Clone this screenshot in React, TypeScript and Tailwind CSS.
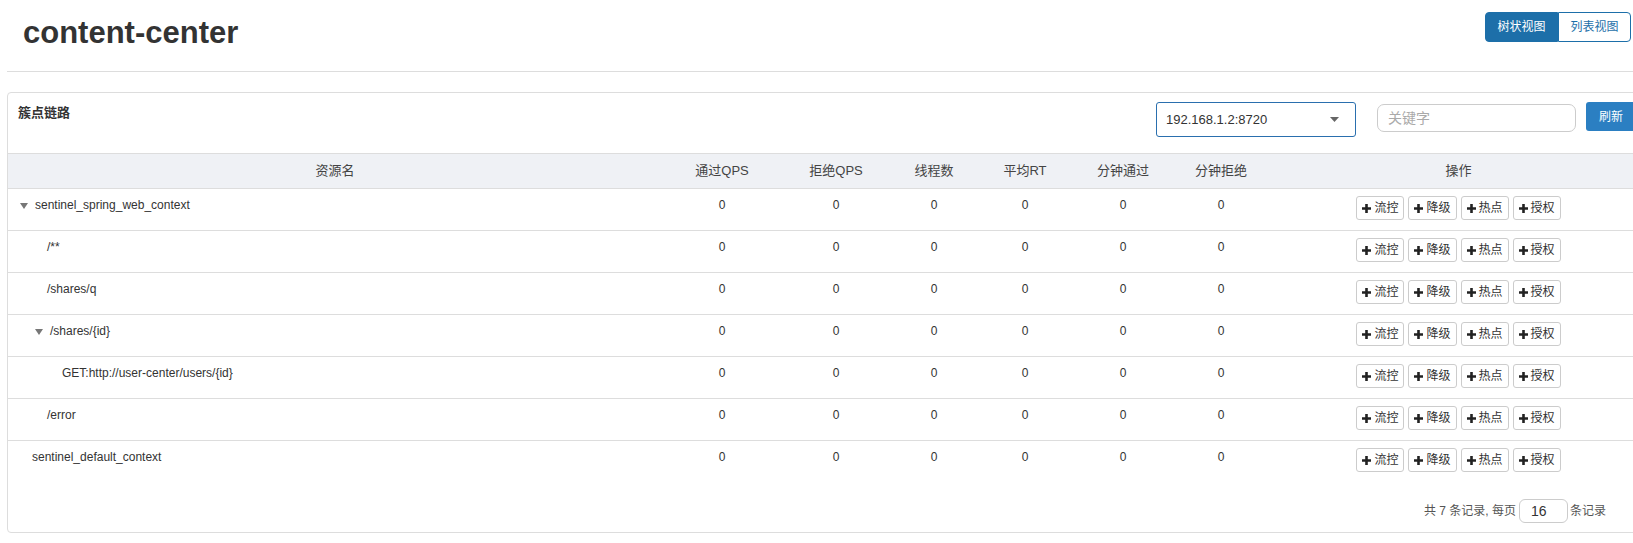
import React from 'react'

// 簇点链路（树状视图）
type Row = { name: string; level: number; arrow: boolean }

const ROWS: Row[] = [
  { name: 'sentinel_spring_web_context', level: 0, arrow: true },
  { name: '/**', level: 1, arrow: false },
  { name: '/shares/q', level: 1, arrow: false },
  { name: '/shares/{id}', level: 1, arrow: true },
  { name: 'GET:http://user-center/users/{id}', level: 2, arrow: false },
  { name: '/error', level: 1, arrow: false },
  { name: 'sentinel_default_context', level: 0, arrow: false },
]

const INDENT = ['ml-0', 'ml-[15px]', 'ml-[30px]']
const COLS = 'grid grid-cols-[654px_120px_108px_88px_94px_102px_94px_381px]'
const HEADERS = ['通过QPS', '拒绝QPS', '线程数', '平均RT', '分钟通过', '分钟拒绝']
const ACTIONS = ['流控', '降级', '热点', '授权']

const Plus = () => (
  <svg width="9" height="9" viewBox="0 0 9 9" className="shrink-0">
    <path d="M4.5 0v9M0 4.5h9" stroke="#222" strokeWidth="2.6" />
  </svg>
)

const Caret = () => (
  <svg width="8" height="6" viewBox="0 0 8 6" className="shrink-0">
    <path d="M0 0h8L4 6z" fill="#777" />
  </svg>
)

const ActionButton: React.FC<{ label: string }> = ({ label }) => (
  <button className="flex items-center gap-[3px] h-[24px] px-[5px] border border-[#ccc] rounded-[3px] bg-white text-[12px] leading-none text-[#333]">
    <Plus />
    {label}
  </button>
)

export default function App() {
  return (
    <div className="h-[543px] w-full overflow-hidden bg-white font-['Liberation_Sans','Noto_Sans_CJK_SC',sans-serif] text-[#333]">
      {/* 页头 */}
      <div className="flex justify-between items-start h-[71px] pl-[23px] pr-[2px] pt-[12px]">
        <h1 className="mt-[4px] text-[31px] leading-[34px] font-bold text-[#333]">content-center</h1>
        <div className="flex text-[12px]">
          <button className="h-[30px] w-[73px] bg-[#1d6fa9] border border-[#1d6fa9] rounded-l-[4px] text-white">树状视图</button>
          <button className="h-[30px] w-[73px] bg-white border border-[#1d6fa9] rounded-r-[4px] text-[#1d6fa9]">列表视图</button>
        </div>
      </div>
      <div className="ml-[7px] border-t border-[#ddd]" />

      {/* 面板 */}
      <div className="mt-[20px] ml-[7px] w-[1643px] border border-[#ddd] rounded-[4px] bg-white">
        <div className="flex justify-between items-start h-[60px] pl-[10px] pr-[13px] pt-[9px]">
          <span className="mt-[2px] text-[13px] leading-[18px] font-bold text-[#333]">簇点链路</span>
          <div className="flex items-start">
            <div className="flex items-center justify-between w-[200px] h-[35px] pl-[9px] pr-[16px] border border-[#2a6fae] rounded-[3px] text-[13px] text-[#333]">
              192.168.1.2:8720
              <svg width="9" height="5" viewBox="0 0 9 5"><path d="M0 0h9L4.5 5z" fill="#666" /></svg>
            </div>
            <input
              placeholder="关键字"
              className="ml-[21px] mt-[2px] w-[199px] h-[28px] px-[10px] border border-[#ccc] rounded-[7px] text-[14px] placeholder:text-[#aaa] outline-none"
            />
            <button className="ml-[10px] h-[29px] w-[50px] bg-[#2b7fc2] rounded-[3px] text-[12px] text-white">刷新</button>
          </div>
        </div>

        {/* 表头 */}
        <div className={`${COLS} h-[36px] items-center bg-[#eff1f5] border-y border-[#ddd] text-[13px] text-[#444]`}>
          <div className="text-center">资源名</div>
          {HEADERS.map(h => (
            <div key={h} className="text-center">{h}</div>
          ))}
          <div className="text-center">操作</div>
        </div>

        {ROWS.map((r, i) => (
          <div
            key={r.name}
            className={`${COLS} h-[42px] pt-[8px] text-[12px] leading-[17px] ${i < ROWS.length - 1 ? 'border-b border-[#ddd]' : ''}`}
          >
            <div className="pl-[12px]">
              <div className={`flex items-center ${INDENT[r.level]}`}>
                {r.arrow ? (
                  <span className="flex w-[15px]"><Caret /></span>
                ) : (
                  <span className="w-[12px]" />
                )}
                <span className="text-[#333]">{r.name}</span>
              </div>
            </div>
            {HEADERS.map(h => (
              <div key={h} className="text-center text-[#333]">0</div>
            ))}
            <div className="flex justify-center items-start gap-[4px] -mt-[1px]">
              {ACTIONS.map(a => (
                <ActionButton key={a} label={a} />
              ))}
            </div>
          </div>
        ))}

        {/* 分页 */}
        <div className="flex justify-end items-center pt-[16px] pb-[9px] pr-[43px] text-[12px] text-[#555]">
          <span>共 7 条记录, 每页</span>
          <div className="ml-[3px] mr-[2px] flex items-center w-[49px] h-[24px] pl-[11px] border border-[#ccc] rounded-[6px] text-[14px] text-[#333]">16</div>
          <span>条记录</span>
        </div>
      </div>
    </div>
  )
}
